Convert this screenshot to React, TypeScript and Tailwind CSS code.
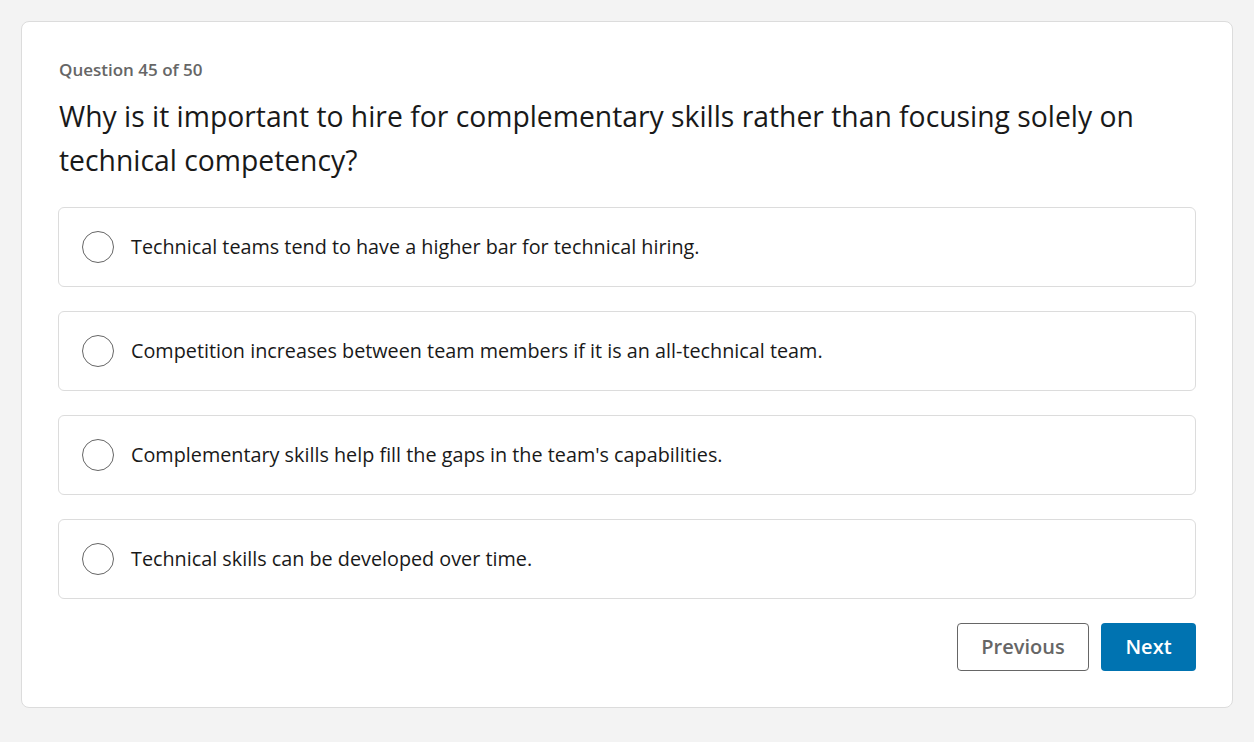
const options = [
  "Technical teams tend to have a higher bar for technical hiring.",
  "Competition increases between team members if it is an all-technical team.",
  "Complementary skills help fill the gaps in the team's capabilities.",
  "Technical skills can be developed over time.",
];

export default function App() {
  return (
    <div className="min-h-[742px] bg-[#f3f3f3] p-[21px] font-['Open_Sans','Noto_Sans',sans-serif]">
      <div className="rounded-lg border border-[#dcdcdc] bg-white px-[36px] pb-[36px] pt-[36px]">
        <p className="pl-px text-[17px] font-semibold leading-[24px] text-[#666]">Question 45 of 50</p>
        <h1 className="mt-[12px] pl-px text-[28.3px] leading-[44px] text-[#191919]">
          Why is it important to hire for complementary skills rather than focusing solely on technical competency?
        </h1>
        <div className="mt-[25px] flex flex-col gap-[24px]">
          {options.map((o) => (
            <label key={o} className="flex h-[80px] items-center rounded-md border border-[#dcdcdc] px-[23px]">
              <span className="h-[32px] w-[32px] shrink-0 rounded-full border-[1.5px] border-[#666]" />
              <span className="ml-[17px] text-[19.8px] text-[#191919]">{o}</span>
            </label>
          ))}
        </div>
        <div className="mt-[24px] flex justify-end gap-[12px]">
          <button className="h-[48px] w-[132px] rounded border border-[#666] text-[20px] font-semibold text-[#666]">Previous</button>
          <button className="h-[48px] w-[95px] rounded bg-[#0073b1] text-[20px] font-semibold text-white">Next</button>
        </div>
      </div>
    </div>
  );
}
